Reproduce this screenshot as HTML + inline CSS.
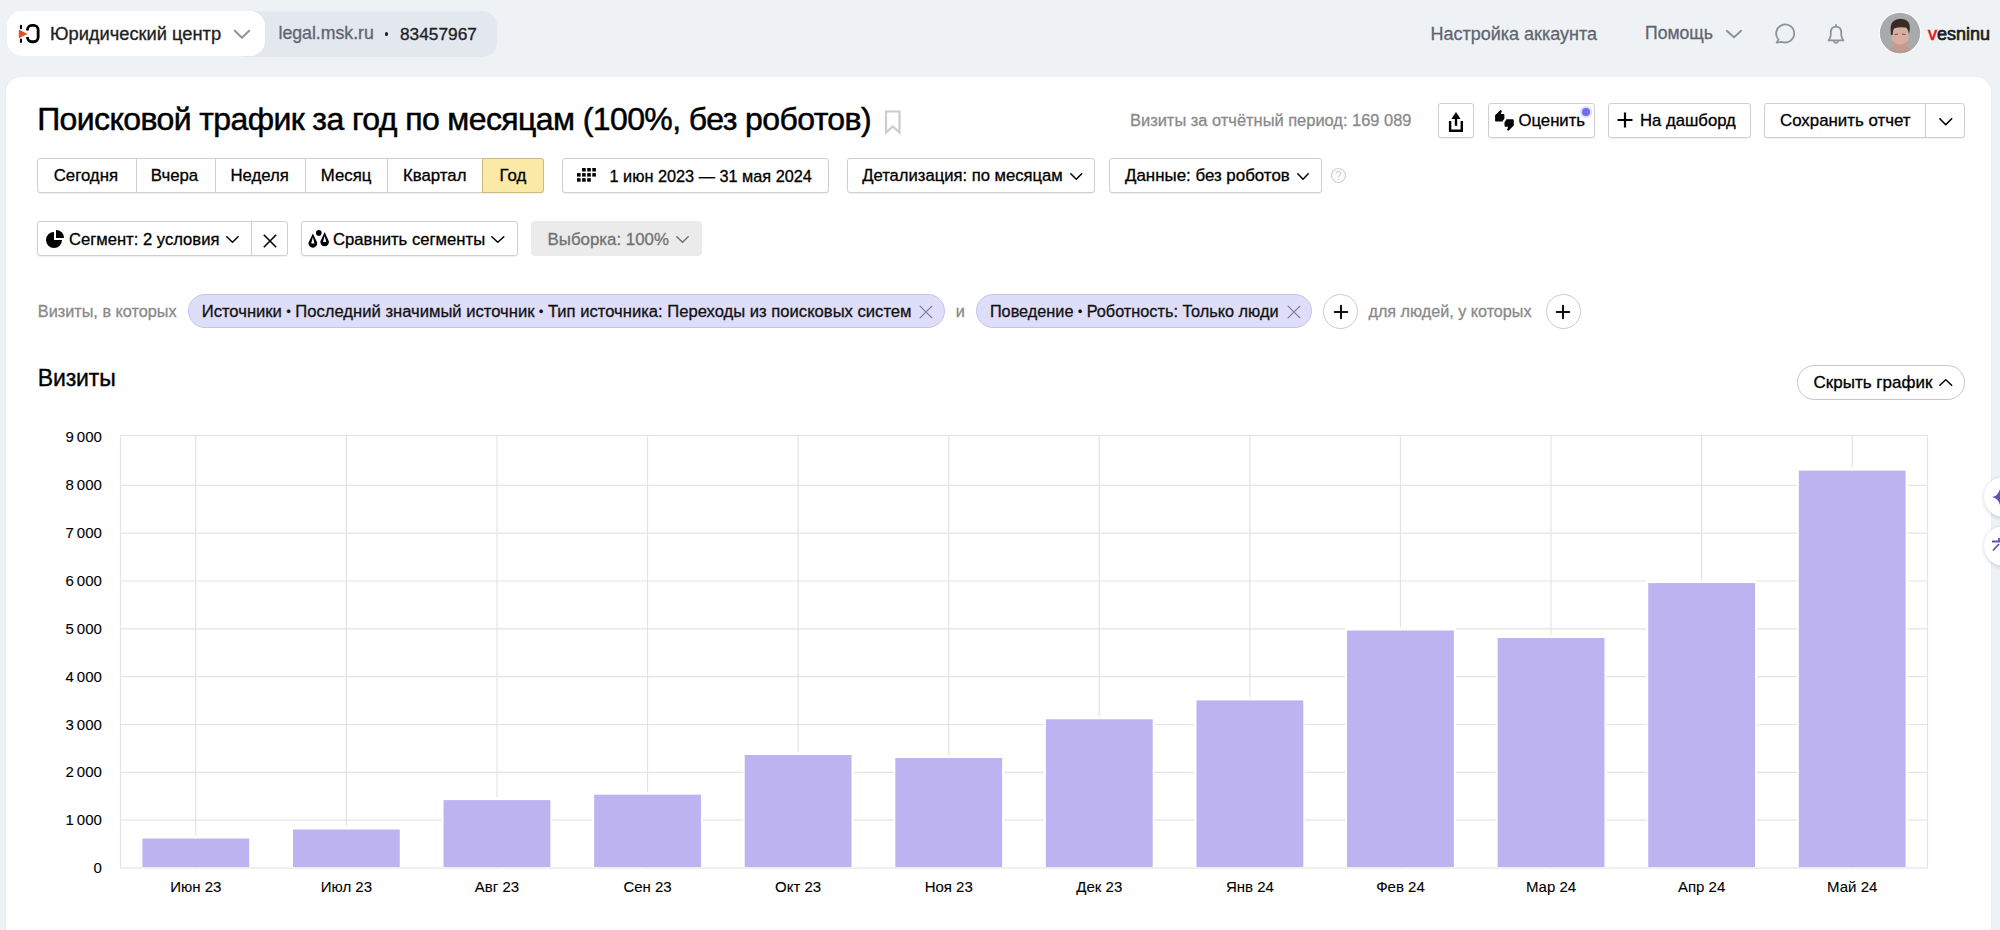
<!DOCTYPE html>
<html><head><meta charset="utf-8">
<style>
html,body{margin:0;padding:0;}
body{width:2000px;height:930px;overflow:hidden;position:relative;background:#eef2f4;font-family:"Liberation Sans",sans-serif;}
.t{position:absolute;white-space:nowrap;-webkit-text-stroke:0.3px currentColor;}
.r{position:absolute;box-sizing:border-box;}
svg.r{overflow:visible;}
</style></head><body>
<div class="r" style="left:230.00px;top:11.00px;width:267.00px;height:46.00px;background:#e3e7ee;border-radius:15px;"></div>
<div class="r" style="left:7.00px;top:11.00px;width:258.00px;height:45.00px;background:#fff;border-radius:15px;"></div>
<svg class="r" style="left:14px;top:20px" width="32" height="28" viewBox="0 0 32 28">
<path d="M6.95 5.8 L6.95 8.2 M6.95 19.6 L6.95 22" stroke="#000" stroke-width="2.1" stroke-linecap="round"/>
<path d="M4.8 9.6 L13.5 14 L4.8 18.2 Z" fill="#e0502a"/>
<path d="M13.45 10.4 L13.45 9.85 A4.4 4.4 0 0 1 17.85 5.45 L19.75 5.45 A4.4 4.4 0 0 1 24.15 9.85 L24.15 17.35 A4.4 4.4 0 0 1 19.75 21.75 L17.85 21.75 A4.4 4.4 0 0 1 13.45 17.35 L13.45 16.9" fill="none" stroke="#000" stroke-width="2.8"/>
</svg>
<div class="t" style="left:50.00px;top:22.68px;font-size:18.3px;line-height:21.96px;color:#21201f;">Юридический центр</div>
<svg class="r" style="left:234px;top:30px" width="16" height="8.5" viewBox="0 0 16 8.5"><path d="M0.8 0.8 L8.0 7.7 L15.2 0.8" fill="none" stroke="#8f949c" stroke-width="2" stroke-linecap="round" stroke-linejoin="round"/></svg>
<div class="t" style="left:278.50px;top:23.24px;font-size:17.7px;line-height:21.24px;color:#5e6571;">legal.msk.ru</div>
<div class="r" style="left:384.80px;top:32.20px;width:3.40px;height:3.40px;background:#21201f;border-radius:50%;"></div>
<div class="t" style="left:400.00px;top:23.62px;font-size:17.3px;line-height:20.76px;color:#21201f;">83457967</div>
<div class="t" style="left:1430.50px;top:23.96px;font-size:18px;line-height:21.60px;color:#5e6571;">Настройка аккаунта</div>
<div class="t" style="left:1645.00px;top:22.84px;font-size:17.6px;line-height:21.12px;color:#5e6571;">Помощь</div>
<svg class="r" style="left:1726px;top:29.5px" width="16" height="8.0" viewBox="0 0 16 8.0"><path d="M0.8 0.8 L8.0 7.2 L15.2 0.8" fill="none" stroke="#8f949c" stroke-width="2" stroke-linecap="round" stroke-linejoin="round"/></svg>
<svg class="r" style="left:1773px;top:22px" width="24" height="24" viewBox="0 0 24 24">
<path d="M5.6 17.6 A9 9 0 1 1 8.8 19.8 L3.6 20.7 Z" fill="none" stroke="#8f949c" stroke-width="1.8" stroke-linejoin="round"/>
</svg>
<svg class="r" style="left:1824px;top:22px" width="24" height="24" viewBox="0 0 24 24">
<path d="M12 3 L12 4.6" stroke="#8f949c" stroke-width="1.9" stroke-linecap="round"/>
<path d="M4.6 18.3 L19.4 18.3 Q17.3 16 17.2 12.5 L17.2 10.2 Q17.2 4.6 12 4.6 Q6.8 4.6 6.8 10.2 L6.8 12.5 Q6.7 16 4.6 18.3 Z" fill="none" stroke="#8f949c" stroke-width="1.8" stroke-linejoin="round"/>
<path d="M9.6 18.8 Q12 23.6 14.4 18.8" fill="none" stroke="#8f949c" stroke-width="1.8" stroke-linecap="round"/>
</svg>
<svg class="r" style="left:1879px;top:12px" width="42" height="42" viewBox="0 0 42 42">
<defs><clipPath id="av"><circle cx="21" cy="21" r="20.2"/></clipPath></defs>
<circle cx="21" cy="21" r="21" fill="#fff"/>
<g clip-path="url(#av)">
<rect width="42" height="42" fill="#a7abab"/>
<path d="M9 42 Q10 34 21 33 Q32 34 33 42 Z" fill="#b89c92"/>
<ellipse cx="21" cy="25" rx="8.6" ry="13" fill="#d8ada2"/>
<path d="M13 29 Q21 36 29 29 Q28 37 21 38 Q14 37 13 29 Z" fill="#c79a8c"/>
<path d="M12 23 Q10.5 13 14 9.5 Q18 6 23 7 Q29 7.5 30.5 12.5 Q31.5 17 30 22 Q29 16 26.5 15.5 Q20 14.5 15 16.5 Q13.5 19 13.6 23 Z" fill="#3a2a24"/>
<path d="M15.5 22.5 L19 22.2 M23 22.2 L26.5 22.5" stroke="#6e5046" stroke-width="1"/>
</g></svg>
<div class="t" style="left:1928.00px;top:23.76px;font-size:18px;line-height:21.60px;color:#1b1b26;-webkit-text-stroke:0.7px currentColor;"><span style="color:#e3201b">v</span>esninu</div>
<div class="r" style="left:5.50px;top:77.00px;width:1985.20px;height:923.00px;background:#fff;border-radius:15px 15px 0 0;box-shadow:0 0 2px rgba(0,0,0,0.07);"></div>
<div class="t" style="left:37.20px;top:99.51px;font-size:32px;line-height:38.40px;color:#000;letter-spacing:-0.6px;-webkit-text-stroke:0.5px #000;">Поисковой трафик за год по месяцам (100%, без роботов)</div>
<svg class="r" style="left:884px;top:110px" width="18" height="24" viewBox="0 0 18 24">
<path d="M2 1.5 L15.5 1.5 L15.5 22.5 L8.75 16.5 L2 22.5 Z" fill="none" stroke="#cccccc" stroke-width="2.2" stroke-linejoin="miter"/>
</svg>
<div class="t" style="left:1130.00px;top:110.63px;font-size:16.45px;line-height:19.74px;color:#8a8a8a;">Визиты за отчётный период: 169&nbsp;089</div>
<div class="r" style="left:1438.00px;top:103.00px;width:35.50px;height:34.50px;border:1px solid #cfcfcf;border-radius:3px;background:#fff;box-shadow:0 1px 1px rgba(0,0,0,0.06);"></div>
<svg class="r" style="left:1436px;top:100px" width="40" height="40" viewBox="0 0 40 40">
<path d="M20 11.9 L15.4 18.9 L24.6 18.9 Z" fill="#000"/>
<rect x="18.8" y="18" width="2.4" height="7.8" fill="#000"/>
<path d="M14.1 21.1 L14.1 30.8 L25.8 30.8 L25.8 21.1" fill="none" stroke="#000" stroke-width="2.4"/>
</svg>
<div class="r" style="left:1487.50px;top:103.00px;width:107.00px;height:34.50px;border:1px solid #cfcfcf;border-radius:3px;background:#fff;box-shadow:0 1px 1px rgba(0,0,0,0.06);"></div>
<svg class="r" style="left:1490px;top:106px" width="30" height="30" viewBox="0 0 30 30">
<path id="tu" d="M5.1 9.3 L10.2 4.3 Q10.9 3.7 11.5 4.5 L11.8 5.3 L10.7 8.1 L13.3 8.1 Q14.4 8.1 14.4 9.3 L14.4 12.6 L12.4 15.6 L6.3 15.6 Q5.1 15.6 5.1 14.4 Z" fill="#000"/>
<path d="M5.1 9.3 L10.2 4.3 Q10.9 3.7 11.5 4.5 L11.8 5.3 L10.7 8.1 L13.3 8.1 Q14.4 8.1 14.4 9.3 L14.4 12.6 L12.4 15.6 L6.3 15.6 Q5.1 15.6 5.1 14.4 Z" fill="#000" transform="rotate(180 14.45 14.4)"/>
</svg>
<div class="t" style="left:1518.50px;top:111.39px;font-size:16.7px;line-height:20.04px;color:#000;">Оценить</div>
<div class="r" style="left:1580px;top:105.5px;width:12px;height:12px;border-radius:50%;background:rgba(120,120,240,0.25);"></div>
<div class="r" style="left:1582px;top:107.5px;width:8px;height:8px;border-radius:50%;background:#6f6ff0;"></div>
<div class="r" style="left:1608.00px;top:103.00px;width:142.50px;height:34.50px;border:1px solid #cfcfcf;border-radius:3px;background:#fff;box-shadow:0 1px 1px rgba(0,0,0,0.06);"></div>
<svg class="r" style="left:1616px;top:111px" width="18" height="18" viewBox="0 0 18 18">
<path d="M9 1.5 L9 16.5 M1.5 9 L16.5 9" stroke="#000" stroke-width="2.2"/>
</svg>
<div class="t" style="left:1640.00px;top:111.39px;font-size:16.7px;line-height:20.04px;color:#000;">На дашборд</div>
<div class="r" style="left:1764.00px;top:103.00px;width:200.50px;height:34.50px;border:1px solid #cfcfcf;border-radius:3px;background:#fff;box-shadow:0 1px 1px rgba(0,0,0,0.06);"></div>
<div class="r" style="left:1925.00px;top:104.00px;width:1.00px;height:32.50px;background:#cfcfcf;"></div>
<div class="t" style="left:1780.00px;top:111.23px;font-size:16.87px;line-height:20.24px;color:#000;">Сохранить отчет</div>
<svg class="r" style="left:1939px;top:118px" width="13.5" height="7.599999999999994" viewBox="0 0 13.5 7.599999999999994"><path d="M0.8 0.8 L6.75 6.7999999999999945 L12.7 0.8" fill="none" stroke="#000" stroke-width="1.6" stroke-linecap="round" stroke-linejoin="round"/></svg>
<div class="r" style="left:37.20px;top:158.00px;width:506.80px;height:34.50px;border:1px solid #cfcfcf;border-radius:3px;background:#fff;box-shadow:0 1px 1px rgba(0,0,0,0.06);"></div>
<div class="r" style="left:482.40px;top:158.00px;width:61.60px;height:34.50px;background:#fbe9a8;border:1px solid #cdb988;border-radius:0 3px 3px 0;"></div>
<div class="r" style="left:135.50px;top:159.00px;width:1.00px;height:32.50px;background:#cfcfcf;"></div>
<div class="r" style="left:214.50px;top:159.00px;width:1.00px;height:32.50px;background:#cfcfcf;"></div>
<div class="r" style="left:304.50px;top:159.00px;width:1.00px;height:32.50px;background:#cfcfcf;"></div>
<div class="r" style="left:386.50px;top:159.00px;width:1.00px;height:32.50px;background:#cfcfcf;"></div>
<div class="t" style="left:53.70px;top:166.30px;font-size:16.8px;line-height:20.16px;color:#000;">Сегодня</div>
<div class="t" style="left:150.80px;top:166.30px;font-size:16.8px;line-height:20.16px;color:#000;">Вчера</div>
<div class="t" style="left:230.40px;top:166.30px;font-size:16.8px;line-height:20.16px;color:#000;">Неделя</div>
<div class="t" style="left:320.80px;top:166.30px;font-size:16.8px;line-height:20.16px;color:#000;">Месяц</div>
<div class="t" style="left:403.00px;top:166.30px;font-size:16.8px;line-height:20.16px;color:#000;">Квартал</div>
<div class="t" style="left:499.60px;top:166.30px;font-size:16.8px;line-height:20.16px;color:#000;">Год</div>
<div class="r" style="left:561.50px;top:158.00px;width:267.00px;height:34.50px;border:1px solid #cfcfcf;border-radius:3px;background:#fff;box-shadow:0 1px 1px rgba(0,0,0,0.06);"></div>
<svg class="r" style="left:577.1px;top:168px" width="20" height="15" viewBox="0 0 20 15"><g fill="#000"><rect x="5.10" y="0.00" width="3.6" height="3.5"/><rect x="10.20" y="0.00" width="3.6" height="3.5"/><rect x="15.30" y="0.00" width="3.6" height="3.5"/><rect x="0.00" y="5.10" width="3.6" height="3.5"/><rect x="5.10" y="5.10" width="3.6" height="3.5"/><rect x="10.20" y="5.10" width="3.6" height="3.5"/><rect x="15.30" y="5.10" width="3.6" height="3.5"/><rect x="0.00" y="10.20" width="3.6" height="3.5"/><rect x="5.10" y="10.20" width="3.6" height="3.5"/><rect x="10.20" y="10.20" width="3.6" height="3.5"/></g></svg>
<div class="t" style="left:609.50px;top:166.77px;font-size:16.3px;line-height:19.56px;color:#000;">1 июн 2023 — 31 мая 2024</div>
<div class="r" style="left:846.50px;top:158.00px;width:248.50px;height:34.50px;border:1px solid #cfcfcf;border-radius:3px;background:#fff;box-shadow:0 1px 1px rgba(0,0,0,0.06);"></div>
<div class="t" style="left:862.20px;top:166.45px;font-size:16.64px;line-height:19.97px;color:#000;">Детализация: по месяцам</div>
<svg class="r" style="left:1069.5px;top:172.5px" width="12.5" height="7.0" viewBox="0 0 12.5 7.0"><path d="M0.8 0.8 L6.25 6.2 L11.7 0.8" fill="none" stroke="#000" stroke-width="1.5" stroke-linecap="round" stroke-linejoin="round"/></svg>
<div class="r" style="left:1108.80px;top:158.00px;width:212.90px;height:34.50px;border:1px solid #cfcfcf;border-radius:3px;background:#fff;box-shadow:0 1px 1px rgba(0,0,0,0.06);"></div>
<div class="t" style="left:1125.00px;top:166.20px;font-size:16.9px;line-height:20.28px;color:#000;">Данные: без роботов</div>
<svg class="r" style="left:1297px;top:172.5px" width="12" height="7.0" viewBox="0 0 12 7.0"><path d="M0.8 0.8 L6.0 6.2 L11.2 0.8" fill="none" stroke="#000" stroke-width="1.5" stroke-linecap="round" stroke-linejoin="round"/></svg>
<svg class="r" style="left:1330px;top:167px" width="17" height="17" viewBox="0 0 17 17">
<circle cx="8.5" cy="8.5" r="7" fill="none" stroke="#d0d0d0" stroke-width="1.2"/>
<path d="M6.3 6.6 Q6.3 4.4 8.5 4.4 Q10.7 4.4 10.7 6.4 Q10.7 7.6 9.4 8.4 Q8.5 9 8.5 10.2" fill="none" stroke="#d0d0d0" stroke-width="1.2"/>
<circle cx="8.5" cy="12.3" r="0.8" fill="#d0d0d0"/>
</svg>
<div class="r" style="left:37.40px;top:221.20px;width:250.20px;height:35.30px;border:1px solid #cfcfcf;border-radius:3px;background:#fff;box-shadow:0 1px 1px rgba(0,0,0,0.06);"></div>
<div class="r" style="left:251.00px;top:222.20px;width:1.00px;height:33.30px;background:#cfcfcf;"></div>
<svg class="r" style="left:40px;top:224px" width="32" height="32" viewBox="0 0 32 32">
<path d="M14 16 L22 16 A8 8 0 1 1 14 8 Z" fill="#000"/>
<path d="M16 14 L16 6 A8 8 0 0 1 24 14 Z" fill="#000"/>
</svg>
<div class="t" style="left:69.00px;top:229.86px;font-size:16.63px;line-height:19.96px;color:#000;">Сегмент: 2 условия</div>
<svg class="r" style="left:226.4px;top:235.5px" width="12.900000000000006" height="7.0" viewBox="0 0 12.900000000000006 7.0"><path d="M0.8 0.8 L6.450000000000003 6.2 L12.100000000000005 0.8" fill="none" stroke="#000" stroke-width="1.5" stroke-linecap="round" stroke-linejoin="round"/></svg>
<svg class="r" style="left:262px;top:233px" width="16" height="16" viewBox="0 0 16 16">
<path d="M1.8 1.8 L14.2 14.2 M14.2 1.8 L1.8 14.2" stroke="#000" stroke-width="1.6"/>
</svg>
<div class="r" style="left:301.20px;top:221.20px;width:216.80px;height:35.30px;border:1px solid #cfcfcf;border-radius:3px;background:#fff;box-shadow:0 1px 1px rgba(0,0,0,0.06);"></div>
<svg class="r" style="left:302px;top:224px" width="32" height="32" viewBox="0 0 32 32">
<path d="M10.85 9.4 L15.11 18.48 A4.35 4.35 0 1 1 6.59 18.48 Z" fill="#000"/><path d="M10.85 13.2 L12.549999999999999 19.4 L9.15 19.4 Z" fill="#fff"/><path d="M22.65 8.1 L26.81 17.20 A4.25 4.25 0 1 1 18.48 17.20 Z" fill="#000"/><path d="M22.65 12.0 L24.25 18.0 L21.049999999999997 18.0 Z" fill="#fff"/><circle cx="16.8" cy="8.9" r="2.8" fill="#000"/>
</svg>
<div class="t" style="left:333.00px;top:229.81px;font-size:16.68px;line-height:20.02px;color:#000;">Сравнить сегменты</div>
<svg class="r" style="left:491px;top:235.5px" width="13.600000000000023" height="7.0" viewBox="0 0 13.600000000000023 7.0"><path d="M0.8 0.8 L6.800000000000011 6.2 L12.800000000000022 0.8" fill="none" stroke="#000" stroke-width="1.5" stroke-linecap="round" stroke-linejoin="round"/></svg>
<div class="r" style="left:530.90px;top:221.20px;width:170.90px;height:35.30px;background:#ebebeb;border-radius:4px;"></div>
<div class="t" style="left:547.60px;top:229.64px;font-size:16.86px;line-height:20.23px;color:#727272;">Выборка: 100%</div>
<svg class="r" style="left:676px;top:235.5px" width="13" height="7.0" viewBox="0 0 13 7.0"><path d="M0.8 0.8 L6.5 6.2 L12.2 0.8" fill="none" stroke="#727272" stroke-width="1.5" stroke-linecap="round" stroke-linejoin="round"/></svg>
<div class="t" style="left:37.80px;top:302.41px;font-size:16.26px;line-height:19.51px;color:#8a8a8a;">Визиты, в которых</div>
<div class="r" style="left:187.50px;top:294.20px;width:757.00px;height:33.80px;background:#dfdef9;border:1px solid #c6c2ec;border-radius:17px;"></div>
<div class="t" style="left:201.70px;top:302.06px;font-size:16.63px;line-height:19.96px;color:#111;">Источники <span style="font-size:12px;position:relative;top:-1.5px">•</span> Последний значимый источник <span style="font-size:12px;position:relative;top:-1.5px">•</span> Тип источника: Переходы из поисковых систем</div>
<svg class="r" style="left:919.3px;top:304.8px" width="14" height="14" viewBox="0 0 14 14"><path d="M0.8 0.8 L13.2 13.2 M13.2 0.8 L0.8 13.2" stroke="#7c7a96" stroke-width="1.15"/></svg>
<div class="t" style="left:955.70px;top:302.37px;font-size:16.3px;line-height:19.56px;color:#8a8a8a;">и</div>
<div class="r" style="left:975.50px;top:294.20px;width:336.50px;height:33.80px;background:#dfdef9;border:1px solid #c6c2ec;border-radius:17px;"></div>
<div class="t" style="left:989.90px;top:302.40px;font-size:16.27px;line-height:19.52px;color:#111;">Поведение <span style="font-size:12px;position:relative;top:-1.5px">•</span> Роботность: Только люди</div>
<svg class="r" style="left:1286.5px;top:304.8px" width="14" height="14" viewBox="0 0 14 14"><path d="M0.8 0.8 L13.2 13.2 M13.2 0.8 L0.8 13.2" stroke="#7c7a96" stroke-width="1.15"/></svg>
<div class="r" style="left:1323.10px;top:294.20px;width:35.00px;height:35.00px;border:1px solid #cbcbcb;border-radius:50%;background:#fff;"></div>
<svg class="r" style="left:1332.6px;top:303.7px" width="16" height="16" viewBox="0 0 16 16"><path d="M8 1.8 L8 14.2 M1.8 8 L14.2 8" stroke="#111" stroke-width="2.1" stroke-linecap="round"/></svg>
<div class="t" style="left:1368.50px;top:302.49px;font-size:16.17px;line-height:19.40px;color:#8a8a8a;">для людей, у которых</div>
<div class="r" style="left:1545.50px;top:294.20px;width:35.00px;height:35.00px;border:1px solid #cbcbcb;border-radius:50%;background:#fff;"></div>
<svg class="r" style="left:1555px;top:303.7px" width="16" height="16" viewBox="0 0 16 16"><path d="M8 1.8 L8 14.2 M1.8 8 L14.2 8" stroke="#111" stroke-width="2.1" stroke-linecap="round"/></svg>
<div class="t" style="left:37.70px;top:365.03px;font-size:23px;line-height:27.60px;color:#000;letter-spacing:-0.1px;-webkit-text-stroke:0.35px #000;">Визиты</div>
<div class="r" style="left:1797.00px;top:364.50px;width:168.00px;height:35.10px;border:1px solid #c6c6c6;border-radius:18px;background:#fff;"></div>
<div class="t" style="left:1813.60px;top:373.11px;font-size:17.0px;line-height:20.40px;color:#000;">Скрыть график</div>
<svg class="r" style="left:1939px;top:378.6px" width="13.5" height="7.099999999999966" viewBox="0 0 13.5 7.099999999999966"><path d="M0.8 6.299999999999966 L6.75 0.8 L12.7 6.299999999999966" fill="none" stroke="#000" stroke-width="1.5" stroke-linecap="round" stroke-linejoin="round"/></svg>
<svg class="r" style="left:0;top:0" width="2000" height="930" viewBox="0 0 2000 930"><rect x="120.5" y="435.5" width="1807.0" height="432.5" fill="none" stroke="#e4e4e4" stroke-width="1.2"/><line x1="120.5" y1="820.17" x2="1927.5" y2="820.17" stroke="#e4e4e4" stroke-width="1.2"/><line x1="120.5" y1="772.34" x2="1927.5" y2="772.34" stroke="#e4e4e4" stroke-width="1.2"/><line x1="120.5" y1="724.51" x2="1927.5" y2="724.51" stroke="#e4e4e4" stroke-width="1.2"/><line x1="120.5" y1="676.68" x2="1927.5" y2="676.68" stroke="#e4e4e4" stroke-width="1.2"/><line x1="120.5" y1="628.85" x2="1927.5" y2="628.85" stroke="#e4e4e4" stroke-width="1.2"/><line x1="120.5" y1="581.02" x2="1927.5" y2="581.02" stroke="#e4e4e4" stroke-width="1.2"/><line x1="120.5" y1="533.19" x2="1927.5" y2="533.19" stroke="#e4e4e4" stroke-width="1.2"/><line x1="120.5" y1="485.36" x2="1927.5" y2="485.36" stroke="#e4e4e4" stroke-width="1.2"/><line x1="195.79" y1="435.5" x2="195.79" y2="868" stroke="#e4e4e4" stroke-width="1.2"/><line x1="346.38" y1="435.5" x2="346.38" y2="868" stroke="#e4e4e4" stroke-width="1.2"/><line x1="496.96" y1="435.5" x2="496.96" y2="868" stroke="#e4e4e4" stroke-width="1.2"/><line x1="647.54" y1="435.5" x2="647.54" y2="868" stroke="#e4e4e4" stroke-width="1.2"/><line x1="798.12" y1="435.5" x2="798.12" y2="868" stroke="#e4e4e4" stroke-width="1.2"/><line x1="948.71" y1="435.5" x2="948.71" y2="868" stroke="#e4e4e4" stroke-width="1.2"/><line x1="1099.29" y1="435.5" x2="1099.29" y2="868" stroke="#e4e4e4" stroke-width="1.2"/><line x1="1249.88" y1="435.5" x2="1249.88" y2="868" stroke="#e4e4e4" stroke-width="1.2"/><line x1="1400.46" y1="435.5" x2="1400.46" y2="868" stroke="#e4e4e4" stroke-width="1.2"/><line x1="1551.04" y1="435.5" x2="1551.04" y2="868" stroke="#e4e4e4" stroke-width="1.2"/><line x1="1701.62" y1="435.5" x2="1701.62" y2="868" stroke="#e4e4e4" stroke-width="1.2"/><line x1="1852.21" y1="435.5" x2="1852.21" y2="868" stroke="#e4e4e4" stroke-width="1.2"/><rect x="140.39" y="835.50" width="110.80" height="31.50" fill="#fff"/><rect x="142.39" y="838.50" width="106.80" height="28.50" fill="#bdb3f1"/><rect x="290.98" y="826.50" width="110.80" height="40.50" fill="#fff"/><rect x="292.98" y="829.50" width="106.80" height="37.50" fill="#bdb3f1"/><rect x="441.56" y="797.10" width="110.80" height="69.90" fill="#fff"/><rect x="443.56" y="800.10" width="106.80" height="66.90" fill="#bdb3f1"/><rect x="592.14" y="791.70" width="110.80" height="75.30" fill="#fff"/><rect x="594.14" y="794.70" width="106.80" height="72.30" fill="#bdb3f1"/><rect x="742.73" y="752.00" width="110.80" height="115.00" fill="#fff"/><rect x="744.73" y="755.00" width="106.80" height="112.00" fill="#bdb3f1"/><rect x="893.31" y="755.00" width="110.80" height="112.00" fill="#fff"/><rect x="895.31" y="758.00" width="106.80" height="109.00" fill="#bdb3f1"/><rect x="1043.89" y="716.30" width="110.80" height="150.70" fill="#fff"/><rect x="1045.89" y="719.30" width="106.80" height="147.70" fill="#bdb3f1"/><rect x="1194.47" y="697.40" width="110.80" height="169.60" fill="#fff"/><rect x="1196.47" y="700.40" width="106.80" height="166.60" fill="#bdb3f1"/><rect x="1345.06" y="627.50" width="110.80" height="239.50" fill="#fff"/><rect x="1347.06" y="630.50" width="106.80" height="236.50" fill="#bdb3f1"/><rect x="1495.64" y="635.00" width="110.80" height="232.00" fill="#fff"/><rect x="1497.64" y="638.00" width="106.80" height="229.00" fill="#bdb3f1"/><rect x="1646.22" y="580.10" width="110.80" height="286.90" fill="#fff"/><rect x="1648.22" y="583.10" width="106.80" height="283.90" fill="#bdb3f1"/><rect x="1796.81" y="467.60" width="110.80" height="399.40" fill="#fff"/><rect x="1798.81" y="470.60" width="106.80" height="396.40" fill="#bdb3f1"/></svg>
<div class="t" style="left:-298.20px;width:400px;text-align:right;top:428.11px;font-size:15px;line-height:18.00px;color:#000;-webkit-text-stroke:0.1px #000;">9&#8239;000</div>
<div class="t" style="left:-298.20px;width:400px;text-align:right;top:476.02px;font-size:15px;line-height:18.00px;color:#000;-webkit-text-stroke:0.1px #000;">8&#8239;000</div>
<div class="t" style="left:-298.20px;width:400px;text-align:right;top:523.93px;font-size:15px;line-height:18.00px;color:#000;-webkit-text-stroke:0.1px #000;">7&#8239;000</div>
<div class="t" style="left:-298.20px;width:400px;text-align:right;top:571.84px;font-size:15px;line-height:18.00px;color:#000;-webkit-text-stroke:0.1px #000;">6&#8239;000</div>
<div class="t" style="left:-298.20px;width:400px;text-align:right;top:619.75px;font-size:15px;line-height:18.00px;color:#000;-webkit-text-stroke:0.1px #000;">5&#8239;000</div>
<div class="t" style="left:-298.20px;width:400px;text-align:right;top:667.66px;font-size:15px;line-height:18.00px;color:#000;-webkit-text-stroke:0.1px #000;">4&#8239;000</div>
<div class="t" style="left:-298.20px;width:400px;text-align:right;top:715.57px;font-size:15px;line-height:18.00px;color:#000;-webkit-text-stroke:0.1px #000;">3&#8239;000</div>
<div class="t" style="left:-298.20px;width:400px;text-align:right;top:763.48px;font-size:15px;line-height:18.00px;color:#000;-webkit-text-stroke:0.1px #000;">2&#8239;000</div>
<div class="t" style="left:-298.20px;width:400px;text-align:right;top:811.39px;font-size:15px;line-height:18.00px;color:#000;-webkit-text-stroke:0.1px #000;">1&#8239;000</div>
<div class="t" style="left:-298.20px;width:400px;text-align:right;top:859.30px;font-size:15px;line-height:18.00px;color:#000;-webkit-text-stroke:0.1px #000;">0</div>
<div class="t" style="left:-4.21px;width:400px;text-align:center;top:877.80px;font-size:15px;line-height:18.00px;color:#000;-webkit-text-stroke:0.1px #000;">Июн 23</div>
<div class="t" style="left:146.38px;width:400px;text-align:center;top:877.80px;font-size:15px;line-height:18.00px;color:#000;-webkit-text-stroke:0.1px #000;">Июл 23</div>
<div class="t" style="left:296.96px;width:400px;text-align:center;top:877.80px;font-size:15px;line-height:18.00px;color:#000;-webkit-text-stroke:0.1px #000;">Авг 23</div>
<div class="t" style="left:447.54px;width:400px;text-align:center;top:877.80px;font-size:15px;line-height:18.00px;color:#000;-webkit-text-stroke:0.1px #000;">Сен 23</div>
<div class="t" style="left:598.12px;width:400px;text-align:center;top:877.80px;font-size:15px;line-height:18.00px;color:#000;-webkit-text-stroke:0.1px #000;">Окт 23</div>
<div class="t" style="left:748.71px;width:400px;text-align:center;top:877.80px;font-size:15px;line-height:18.00px;color:#000;-webkit-text-stroke:0.1px #000;">Ноя 23</div>
<div class="t" style="left:899.29px;width:400px;text-align:center;top:877.80px;font-size:15px;line-height:18.00px;color:#000;-webkit-text-stroke:0.1px #000;">Дек 23</div>
<div class="t" style="left:1049.88px;width:400px;text-align:center;top:877.80px;font-size:15px;line-height:18.00px;color:#000;-webkit-text-stroke:0.1px #000;">Янв 24</div>
<div class="t" style="left:1200.46px;width:400px;text-align:center;top:877.80px;font-size:15px;line-height:18.00px;color:#000;-webkit-text-stroke:0.1px #000;">Фев 24</div>
<div class="t" style="left:1351.04px;width:400px;text-align:center;top:877.80px;font-size:15px;line-height:18.00px;color:#000;-webkit-text-stroke:0.1px #000;">Мар 24</div>
<div class="t" style="left:1501.62px;width:400px;text-align:center;top:877.80px;font-size:15px;line-height:18.00px;color:#000;-webkit-text-stroke:0.1px #000;">Апр 24</div>
<div class="t" style="left:1652.21px;width:400px;text-align:center;top:877.80px;font-size:15px;line-height:18.00px;color:#000;-webkit-text-stroke:0.1px #000;">Май 24</div>
<div class="r" style="left:1983.5px;top:477px;width:40px;height:40px;border-radius:50%;background:#fff;box-shadow:0 1px 4px rgba(0,0,0,0.18);"></div>
<div class="r" style="left:1983.5px;top:526px;width:40px;height:40px;border-radius:50%;background:#fff;box-shadow:0 1px 4px rgba(0,0,0,0.18);"></div>
<svg class="r" style="left:1990px;top:487px" width="14" height="20" viewBox="0 0 14 20">
<path d="M2 10 Q8 9 10 2 Q12 9 18 10 Q12 11 10 18 Q8 11 2 10 Z" fill="#6a4fb0"/>
</svg>
<svg class="r" style="left:1990px;top:536px" width="14" height="20" viewBox="0 0 14 20">
<path d="M2 5.5 L14 5.5 M9 2 L9 5.5 M3 14.5 L9 8" fill="none" stroke="#6a4fb0" stroke-width="1.8"/>
</svg>
</body></html>
